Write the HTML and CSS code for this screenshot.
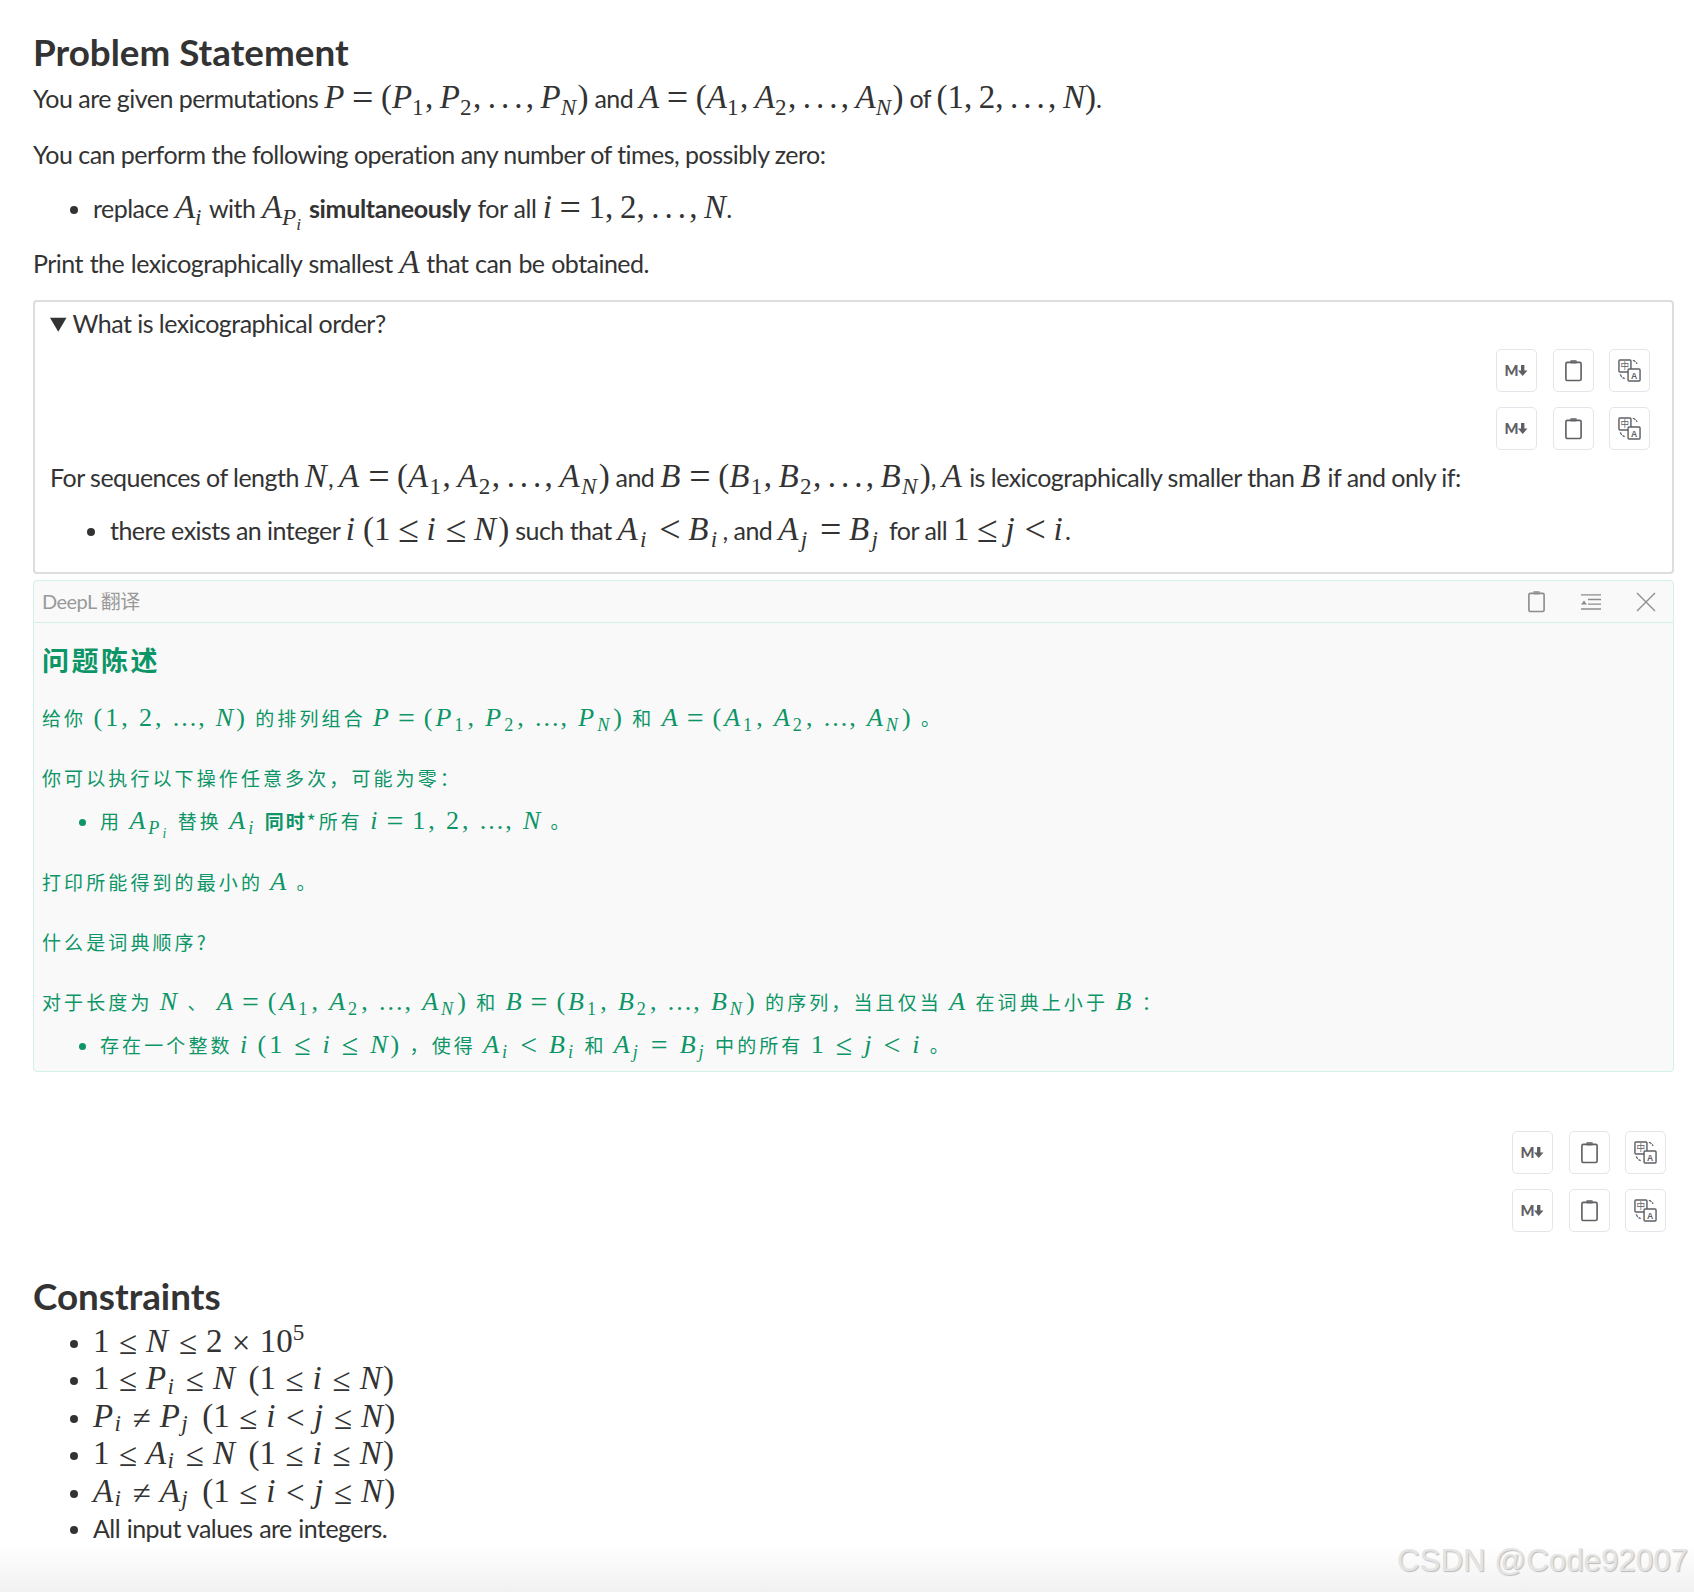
FILE: index.html
```html
<!DOCTYPE html>
<html lang="en">
<head>
<meta charset="utf-8">
<title>Problem Statement</title>
<link rel="stylesheet" href="styles.css">
</head>
<body>
<main class="page">
  <section class="statement">
    <h3 class="title">Problem Statement</h3>
    <p class="para">You are given permutations <span class="m"><i>P</i><b class="r">=</b>(<i>P</i><sub>1</sub>,&thinsp;<i>P</i><sub>2</sub>,&thinsp;<span class="d">...</span>,&thinsp;<i>P</i><sub><i>N</i></sub>)</span> and <span class="m"><i>A</i><b class="r">=</b>(<i>A</i><sub>1</sub>,&thinsp;<i>A</i><sub>2</sub>,&thinsp;<span class="d">...</span>,&thinsp;<i>A</i><sub><i>N</i></sub>)</span> of <span class="m">(1,&thinsp;2,&thinsp;<span class="d">...</span>,&thinsp;<i>N</i>)</span>.</p>
    <p class="para">You can perform the following operation any number of times, possibly zero:</p>
    <ul class="list">
      <li>replace <span class="m"><i>A</i><sub><i>i</i></sub></span> with <span class="m"><i>A</i><sub><i>P<sub><i>i</i></sub></i></sub></span> <strong>simultaneously</strong> for all <span class="m"><i>i</i><b class="r">=</b>1,&thinsp;2,&thinsp;<span class="d">...</span>,&thinsp;<i>N</i></span>.</li>
    </ul>
    <p class="para spaced">Print the lexicographically smallest <span class="m"><i>A</i></span> that can be obtained.</p>

    <details class="box" open>
      <summary class="box-sum"><span class="sum-text">What is lexicographical order?</span></summary>
      <div class="tools-wrap in-box">
        <div class="tools">
          <span class="tool"><svg class="ic-md" viewBox="0 -4 24 22"><text x="0" y="12" class="md-m" textLength="14" lengthAdjust="spacingAndGlyphs">M</text><path d="M16.500 1h3.400v5.400H23L18.200 12 13.400 6.400h3.100z" class="fill"/></svg></span>
          <span class="tool"><svg class="ic-clip" viewBox="0 0 20 24"><rect x="2" y="3.500" width="16" height="19" rx="1.500" class="line"/><rect x="6.500" y="1" width="7" height="3.600" rx="1" class="fill soft"/></svg></span>
          <span class="tool"><svg class="ic-tr" viewBox="0 0 24 24"><rect x="1" y="1" width="12.500" height="12.500" rx="1" class="tile"/><text x="7.200" y="10.800" text-anchor="middle" class="tr-c">中</text><rect x="10.500" y="10.500" width="12.500" height="12.500" rx="1" class="tile"/><text x="16.800" y="20.600" text-anchor="middle" class="tr-a">A</text><path d="M15.500 1.500c2 .3 3.600 1.700 4.300 3.600M2.500 16c.5 2.200 2.300 3.800 4.500 4.400" class="line dash"/></svg></span>
        </div>
        <div class="tools">
          <span class="tool"><svg class="ic-md" viewBox="0 -4 24 22"><text x="0" y="12" class="md-m" textLength="14" lengthAdjust="spacingAndGlyphs">M</text><path d="M16.500 1h3.400v5.400H23L18.200 12 13.400 6.400h3.100z" class="fill"/></svg></span>
          <span class="tool"><svg class="ic-clip" viewBox="0 0 20 24"><rect x="2" y="3.500" width="16" height="19" rx="1.500" class="line"/><rect x="6.500" y="1" width="7" height="3.600" rx="1" class="fill soft"/></svg></span>
          <span class="tool"><svg class="ic-tr" viewBox="0 0 24 24"><rect x="1" y="1" width="12.500" height="12.500" rx="1" class="tile"/><text x="7.200" y="10.800" text-anchor="middle" class="tr-c">中</text><rect x="10.500" y="10.500" width="12.500" height="12.500" rx="1" class="tile"/><text x="16.800" y="20.600" text-anchor="middle" class="tr-a">A</text><path d="M15.500 1.500c2 .3 3.600 1.700 4.300 3.600M2.500 16c.5 2.200 2.300 3.800 4.500 4.400" class="line dash"/></svg></span>
        </div>
      </div>
      <p class="para box-p">For sequences of length <span class="m"><i>N</i></span>, <span class="m"><i>A</i><b class="r">=</b>(<i>A</i><sub>1</sub>,&thinsp;<i>A</i><sub>2</sub>,&thinsp;<span class="d">...</span>,&thinsp;<i>A</i><sub><i>N</i></sub>)</span> and <span class="m"><i>B</i><b class="r">=</b>(<i>B</i><sub>1</sub>,&thinsp;<i>B</i><sub>2</sub>,&thinsp;<span class="d">...</span>,&thinsp;<i>B</i><sub><i>N</i></sub>)</span>, <span class="m"><i>A</i></span> is lexicographically smaller than <span class="m"><i>B</i></span> if and only if:</p>
      <ul class="list box-list">
        <li>there exists an integer <span class="m"><i>i</i></span> <span class="m">(1<b class="r">≤</b><i>i</i><b class="r">≤</b><i>N</i>)</span> such that <span class="m"><i>A</i><sub><i>i</i></sub><b class="r">&lt;</b><i>B</i><sub><i>i</i></sub></span>, and <span class="m"><i>A</i><sub><i>j</i></sub><b class="r">=</b><i>B</i><sub><i>j</i></sub></span> for all <span class="m">1<b class="r">≤</b><i>j</i><b class="r">&lt;</b><i>i</i></span>.</li>
      </ul>
    </details>

    <section class="deepl">
      <header class="deepl-head">
        <span class="deepl-name">DeepL 翻译</span>
        <span class="deepl-acts">
          <svg class="ic-clip" viewBox="0 0 20 24"><rect x="2" y="3.500" width="16" height="19" rx="1.500" class="line"/><rect x="6.500" y="1" width="7" height="3.600" rx="1" class="fill soft"/></svg>
          <svg class="ic-list" viewBox="0 0 20 16"><path d="M0 .8h20M7 5.500h13M7 10.200h13M0 15h20" class="line thin"/><path d="M0 10.500l3-4 3 4z" class="fill"/></svg>
          <svg class="ic-x" viewBox="0 0 20 20"><path d="M1 1l18 18M19 1L1 19" class="line thin"/></svg>
        </span>
      </header>
      <div class="deepl-body" lang="zh-CN">
        <h3 class="zh-title">问题陈述</h3>
        <p class="zh">给你 <span class="m">(1,&thinsp;2,&thinsp;<span class="d">...</span>,&thinsp;<i>N</i>)</span> 的排列组合 <span class="m"><i>P</i><b class="r">=</b>(<i>P</i><sub>1</sub>,&thinsp;<i>P</i><sub>2</sub>,&thinsp;<span class="d">...</span>,&thinsp;<i>P</i><sub><i>N</i></sub>)</span> 和 <span class="m"><i>A</i><b class="r">=</b>(<i>A</i><sub>1</sub>,&thinsp;<i>A</i><sub>2</sub>,&thinsp;<span class="d">...</span>,&thinsp;<i>A</i><sub><i>N</i></sub>)</span> 。</p>
        <p class="zh">你可以执行以下操作任意多次&#65292;可能为零&#65306;</p>
        <ul class="zh-list">
          <li>用 <span class="m"><i>A</i><sub><i>P<sub><i>i</i></sub></i></sub></span> 替换 <span class="m"><i>A</i><sub><i>i</i></sub></span> <strong>同时</strong>*所有 <span class="m"><i>i</i><b class="r">=</b>1,&thinsp;2,&thinsp;<span class="d">...</span>,&thinsp;<i>N</i></span> 。</li>
        </ul>
        <p class="zh">打印所能得到的最小的 <span class="m"><i>A</i></span> 。</p>
        <p class="zh">什么是词典顺序?</p>
        <p class="zh">对于长度为 <span class="m"><i>N</i></span> 、 <span class="m"><i>A</i><b class="r">=</b>(<i>A</i><sub>1</sub>,&thinsp;<i>A</i><sub>2</sub>,&thinsp;<span class="d">...</span>,&thinsp;<i>A</i><sub><i>N</i></sub>)</span> 和 <span class="m"><i>B</i><b class="r">=</b>(<i>B</i><sub>1</sub>,&thinsp;<i>B</i><sub>2</sub>,&thinsp;<span class="d">...</span>,&thinsp;<i>B</i><sub><i>N</i></sub>)</span> 的序列&#65292;当且仅当 <span class="m"><i>A</i></span> 在词典上小于 <span class="m"><i>B</i></span> &#65306;</p>
        <ul class="zh-list wide">
          <li>存在一个整数 <span class="m"><i>i</i></span> <span class="m">(1<b class="r">≤</b><i>i</i><b class="r">≤</b><i>N</i>)</span> &#65292;使得 <span class="m"><i>A</i><sub><i>i</i></sub><b class="r">&lt;</b><i>B</i><sub><i>i</i></sub></span> 和 <span class="m"><i>A</i><sub><i>j</i></sub><b class="r">=</b><i>B</i><sub><i>j</i></sub></span> 中的所有 <span class="m">1<b class="r">≤</b><i>j</i><b class="r">&lt;</b><i>i</i></span> 。</li>
        </ul>
      </div>
    </section>
  </section>

  <div class="tools-wrap outer">
    <div class="tools">
      <span class="tool"><svg class="ic-md" viewBox="0 -4 24 22"><text x="0" y="12" class="md-m" textLength="14" lengthAdjust="spacingAndGlyphs">M</text><path d="M16.500 1h3.400v5.400H23L18.200 12 13.400 6.400h3.100z" class="fill"/></svg></span>
      <span class="tool"><svg class="ic-clip" viewBox="0 0 20 24"><rect x="2" y="3.500" width="16" height="19" rx="1.500" class="line"/><rect x="6.500" y="1" width="7" height="3.600" rx="1" class="fill soft"/></svg></span>
      <span class="tool"><svg class="ic-tr" viewBox="0 0 24 24"><rect x="1" y="1" width="12.500" height="12.500" rx="1" class="tile"/><text x="7.200" y="10.800" text-anchor="middle" class="tr-c">中</text><rect x="10.500" y="10.500" width="12.500" height="12.500" rx="1" class="tile"/><text x="16.800" y="20.600" text-anchor="middle" class="tr-a">A</text><path d="M15.500 1.500c2 .3 3.600 1.700 4.300 3.600M2.500 16c.5 2.200 2.300 3.800 4.500 4.400" class="line dash"/></svg></span>
    </div>
    <div class="tools">
      <span class="tool"><svg class="ic-md" viewBox="0 -4 24 22"><text x="0" y="12" class="md-m" textLength="14" lengthAdjust="spacingAndGlyphs">M</text><path d="M16.500 1h3.400v5.400H23L18.200 12 13.400 6.400h3.100z" class="fill"/></svg></span>
      <span class="tool"><svg class="ic-clip" viewBox="0 0 20 24"><rect x="2" y="3.500" width="16" height="19" rx="1.500" class="line"/><rect x="6.500" y="1" width="7" height="3.600" rx="1" class="fill soft"/></svg></span>
      <span class="tool"><svg class="ic-tr" viewBox="0 0 24 24"><rect x="1" y="1" width="12.500" height="12.500" rx="1" class="tile"/><text x="7.200" y="10.800" text-anchor="middle" class="tr-c">中</text><rect x="10.500" y="10.500" width="12.500" height="12.500" rx="1" class="tile"/><text x="16.800" y="20.600" text-anchor="middle" class="tr-a">A</text><path d="M15.500 1.500c2 .3 3.600 1.700 4.300 3.600M2.500 16c.5 2.200 2.300 3.800 4.500 4.400" class="line dash"/></svg></span>
    </div>
  </div>

  <section class="constraints">
    <h3 class="title">Constraints</h3>
    <ul class="list tight">
      <li><span class="m">1<b class="r">≤</b><i>N</i><b class="r">≤</b>2<b class="r">×</b>10<sup>5</sup></span></li>
      <li><span class="m">1<b class="r">≤</b><i>P</i><sub><i>i</i></sub><b class="r">≤</b><i>N</i> (1<b class="r">≤</b><i>i</i><b class="r">≤</b><i>N</i>)</span></li>
      <li><span class="m"><i>P</i><sub><i>i</i></sub><b class="r">≠</b><i>P</i><sub><i>j</i></sub> (1<b class="r">≤</b><i>i</i><b class="r">&lt;</b><i>j</i><b class="r">≤</b><i>N</i>)</span></li>
      <li><span class="m">1<b class="r">≤</b><i>A</i><sub><i>i</i></sub><b class="r">≤</b><i>N</i> (1<b class="r">≤</b><i>i</i><b class="r">≤</b><i>N</i>)</span></li>
      <li><span class="m"><i>A</i><sub><i>i</i></sub><b class="r">≠</b><i>A</i><sub><i>j</i></sub> (1<b class="r">≤</b><i>i</i><b class="r">&lt;</b><i>j</i><b class="r">≤</b><i>N</i>)</span></li>
      <li>All input values are integers.</li>
    </ul>
  </section>

  <div class="watermark">CSDN @Code92007</div>
</main>
</body>
</html>
```
FILE: styles.css
```css
* { box-sizing: border-box; }
html, body { margin: 0; padding: 0; }
body {
  font-family: Lato, "Noto Sans CJK SC", sans-serif;
  font-size: 25px;
  line-height: 37px;
  letter-spacing: -.53px;
  color: #333;
  background: #fff;
}
.page {
  position: relative;
  height: 1592px;
  padding: 29px 20px 0 33px;
  overflow: hidden;
  background: linear-gradient(to bottom, #fff 0, #fff 1545px, #f1f1f1 1592px);
}
.title {
  margin: 0 0 4px;
  font-size: 36.8px;
  line-height: 46px;
  font-weight: 700;
  letter-spacing: 0;
  color: #333;
}
.para { margin: 0 0 19px; }
.spaced { word-spacing: .8px; }
.list { margin: -3px 0 17px; padding: 0 0 0 60px; word-spacing: .7px; }
.list.tight { margin: 0; }
.list.tight li { height: 37.4px; }
strong { font-weight: 700; letter-spacing: -.35px; }

/* math */
.m {
  font-family: "Liberation Serif", "DejaVu Serif", serif;
  font-size: 33px;
  letter-spacing: 0;
  word-spacing: 0;
  white-space: nowrap;
}
.m i { font-style: italic; }
.m b { font-weight: 400; }
.m .r { font-size: 1.15em; line-height: 0; margin: 0 .2em; vertical-align: -.06em; }
.m .d { letter-spacing: .15em; margin-right: -.05em; }
.m sub, .m sup { font-size: .7em; line-height: 0; }
.m sub { vertical-align: -.3em; margin: 0 .06em 0 0; }
.m sup { vertical-align: .5em; }
.m sub sub { font-size: .75em; vertical-align: -.3em; margin-right: 0; }
.tight .m { word-spacing: .12em; }
.tight .m i { letter-spacing: .04em; }
.box-list .m i { letter-spacing: .07em; }
.tight .m .r { font-size: 1em; margin: 0 .28em; }
.tight .m sub { margin-right: .06em; vertical-align: -.18em; }
.box-list .m sub { margin-right: .16em; }
.box-p .m i { letter-spacing: .04em; }

/* details */
.box {
  height: 274px;
  margin-top: -1px;
  padding: 3px 15px 0;
  border: 2px solid #ddd;
  border-radius: 4px;
}
.box-sum { height: 37px; cursor: pointer; }
.sum-text { margin-left: -4px; }
.tools-wrap { display: flex; flex-direction: column; align-items: flex-end; gap: 15px; }
.in-box { margin: 7px 7px 0 0; }
.tools { display: flex; gap: 15.5px; }
.tool {
  display: flex;
  align-items: center;
  justify-content: center;
  width: 41px;
  height: 43px;
  color: #5f6064;
  background: #fff;
  border: 1px solid #e4e5ea;
  border-radius: 5px;
}
.ic-md { width: 25px; height: 22px; }
.ic-clip { width: 19px; height: 23px; }
.ic-tr { width: 23px; height: 23px; }
.ic-list { width: 20px; height: 16px; }
.ic-x { width: 20px; height: 20px; }
.fill { fill: currentColor; }
.soft { opacity: .75; }
.line { fill: none; stroke: currentColor; stroke-width: 1.7; }
.thin { stroke-width: 1.3; }
.dash { stroke-width: 1.4; stroke-dasharray: 3 1; }
.tile { fill: #fff; stroke: currentColor; stroke-width: 1.5; }
.md-m { font: 900 15px Lato, sans-serif; letter-spacing: 0; fill: currentColor; }
.tr-c { font: 400 9px "Noto Sans CJK SC", sans-serif; letter-spacing: 0; fill: currentColor; }
.tr-a { font: 700 9px "Liberation Sans", sans-serif; letter-spacing: 0; fill: currentColor; }
.box-p { margin: 8px 0 15px; }
.box-list { margin: 0; padding-left: 60px; word-spacing: 0; }

/* translation */
.deepl {
  margin-top: 6px;
  background: #f9f9f9;
  border: 1px solid #d3f1e6;
  border-radius: 4px;
}
.deepl-head {
  display: flex;
  align-items: center;
  justify-content: space-between;
  height: 42px;
  padding: 0 17px 0 8px;
  border-bottom: 1px solid #d3f1e6;
}
.deepl-name { font-size: 20px; color: #999; }
.deepl-acts { display: flex; align-items: center; gap: 35px; color: #8c8c8c; }
.deepl-body {
  height: 448px;
  padding: 17px 8px 0;
  color: #0c9566;
  font-family: "Noto Sans CJK SC", Lato, sans-serif;
  font-size: 19px;
  letter-spacing: 3.1px;
}
.zh-title {
  margin: 0 0 17px;
  font-size: 27px;
  line-height: 40px;
  font-weight: 700;
  letter-spacing: 2.5px;
}
.zh { margin: 0 0 18px; line-height: 42px; }
.zh-list { margin: -17px 0 19px; padding: 0 0 0 58px; line-height: 42px; }
.deepl-body .m { font-size: 26px; letter-spacing: 3px; }
.deepl-body .d { letter-spacing: 2px; margin-right: 0; }
.deepl-body strong { letter-spacing: 2px; }
.wide .m .r { margin: 0 .3em; }

.outer { margin: 59px 8px 0 0; }
.constraints { margin-top: 41px; }
.watermark {
  position: absolute;
  right: 6px;
  bottom: 12px;
  font-family: "Liberation Sans", sans-serif;
  font-size: 31.3px;
  line-height: 38px;
  letter-spacing: 0;
  color: #e4e4e4;
  text-shadow: 1px 1px 1px #bbb;
}
```
